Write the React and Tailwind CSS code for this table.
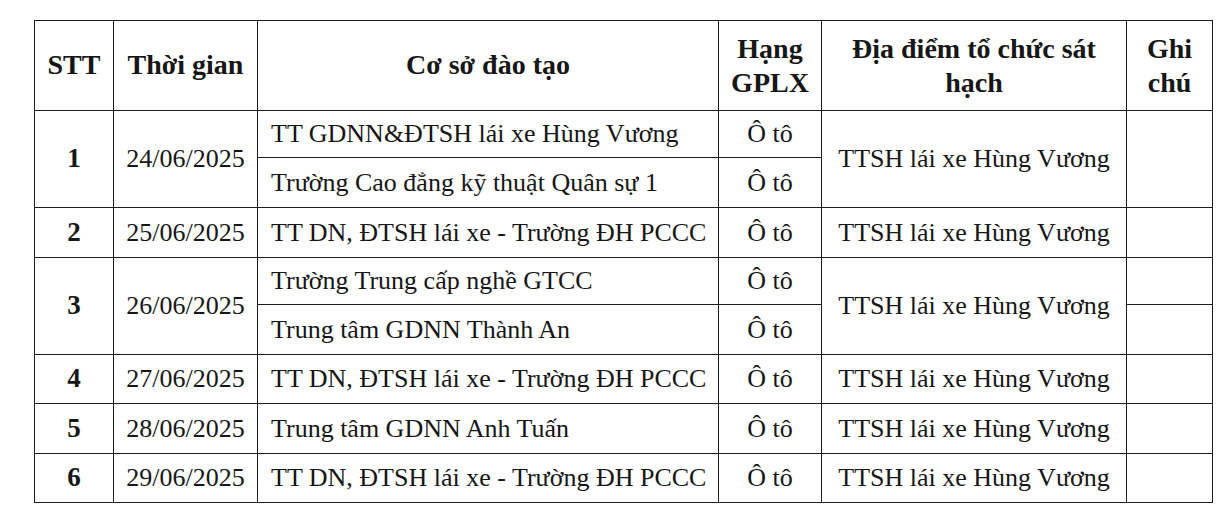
import React from "react";

const td = "border-[1.5px] border-[#1c1c1c] p-0";
const center = "text-center align-middle";
const left = "text-left align-middle pl-[13px] whitespace-nowrap";

export default function App() {
  const loc = "TTSH lái xe Hùng Vương";
  const school = "TT DN, ĐTSH lái xe - Trường ĐH PCCC";
  return (
    <div className="w-[1230px] h-[510px] bg-white overflow-hidden pt-[20px] pl-[34px] text-[#161616] font-['Liberation_Serif','Times_New_Roman',serif] text-[26px] leading-[1.15]">
      <table className="table-fixed border-collapse w-[1178px]">
        <colgroup>
          <col className="w-[79px]" />
          <col className="w-[144px]" />
          <col className="w-[461px]" />
          <col className="w-[103px]" />
          <col className="w-[305px]" />
          <col className="w-[86px]" />
        </colgroup>
        <tbody>
          <tr className="h-[90px] font-bold text-[28px]">
            <td className={`${td} ${center}`}>STT</td>
            <td className={`${td} ${center}`}>Thời gian</td>
            <td className={`${td} ${center}`}>Cơ sở đào tạo</td>
            <td className={`${td} ${center} leading-[34px]`}>Hạng<br />GPLX</td>
            <td className={`${td} ${center} leading-[34px]`}>Địa điểm tổ chức sát<br />hạch</td>
            <td className={`${td} ${center} leading-[34px]`}>Ghi<br />chú</td>
          </tr>
          <tr className="h-[47px]">
            <td rowSpan={2} className={`${td} ${center} font-bold text-[27px]`}>1</td>
            <td rowSpan={2} className={`${td} ${center}`}>24/06/2025</td>
            <td className={`${td} ${left}`}>TT GDNN&amp;ĐTSH lái xe Hùng Vương</td>
            <td className={`${td} ${center}`}>Ô tô</td>
            <td rowSpan={2} className={`${td} ${center}`}>{loc}</td>
            <td rowSpan={2} className={`${td}`}></td>
          </tr>
          <tr className="h-[50px]">
            <td className={`${td} ${left}`}>Trường Cao đẳng kỹ thuật Quân sự 1</td>
            <td className={`${td} ${center}`}>Ô tô</td>
          </tr>
          <tr className="h-[50px]">
            <td className={`${td} ${center} font-bold text-[27px]`}>2</td>
            <td className={`${td} ${center}`}>25/06/2025</td>
            <td className={`${td} ${left}`}>{school}</td>
            <td className={`${td} ${center}`}>Ô tô</td>
            <td className={`${td} ${center}`}>{loc}</td>
            <td className={td}></td>
          </tr>
          <tr className="h-[47px]">
            <td rowSpan={2} className={`${td} ${center} font-bold text-[27px]`}>3</td>
            <td rowSpan={2} className={`${td} ${center}`}>26/06/2025</td>
            <td className={`${td} ${left}`}>Trường Trung cấp nghề GTCC</td>
            <td className={`${td} ${center}`}>Ô tô</td>
            <td rowSpan={2} className={`${td} ${center}`}>{loc}</td>
            <td className={td}></td>
          </tr>
          <tr className="h-[50px]">
            <td className={`${td} ${left}`}>Trung tâm GDNN Thành An</td>
            <td className={`${td} ${center}`}>Ô tô</td>
            <td className={td}></td>
          </tr>
          <tr className="h-[49px]">
            <td className={`${td} ${center} font-bold text-[27px]`}>4</td>
            <td className={`${td} ${center}`}>27/06/2025</td>
            <td className={`${td} ${left}`}>{school}</td>
            <td className={`${td} ${center}`}>Ô tô</td>
            <td className={`${td} ${center}`}>{loc}</td>
            <td className={td}></td>
          </tr>
          <tr className="h-[50px]">
            <td className={`${td} ${center} font-bold text-[27px]`}>5</td>
            <td className={`${td} ${center}`}>28/06/2025</td>
            <td className={`${td} ${left}`}>Trung tâm GDNN Anh Tuấn</td>
            <td className={`${td} ${center}`}>Ô tô</td>
            <td className={`${td} ${center}`}>{loc}</td>
            <td className={td}></td>
          </tr>
          <tr className="h-[49px]">
            <td className={`${td} ${center} font-bold text-[27px]`}>6</td>
            <td className={`${td} ${center}`}>29/06/2025</td>
            <td className={`${td} ${left}`}>{school}</td>
            <td className={`${td} ${center}`}>Ô tô</td>
            <td className={`${td} ${center}`}>{loc}</td>
            <td className={td}></td>
          </tr>
        </tbody>
      </table>
    </div>
  );
}
